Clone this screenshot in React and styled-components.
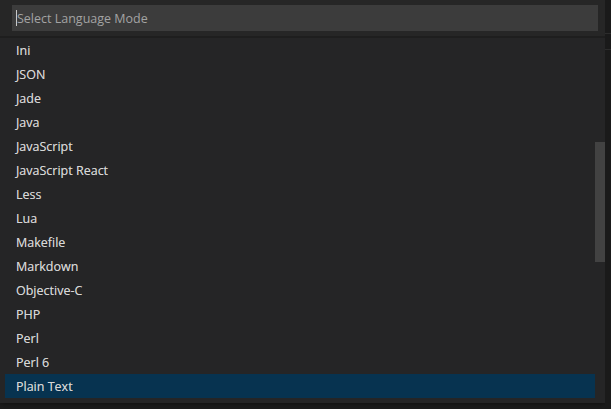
import React from "react";
import { createGlobalStyle, styled } from "styled-components";

const languages = [
  "Ini",
  "JSON",
  "Jade",
  "Java",
  "JavaScript",
  "JavaScript React",
  "Less",
  "Lua",
  "Makefile",
  "Markdown",
  "Objective-C",
  "PHP",
  "Perl",
  "Perl 6",
  "Plain Text",
];

export default function App() {
  return (
    <>
      <GlobalStyle />
      <Screen>
        <Widget>
          <Header>
            <InputBox>
              <Caret />
              <Placeholder>Select Language Mode</Placeholder>
            </InputBox>
          </Header>
          <ListArea>
            <List>
              {languages.map((lang) => (
                <Row key={lang} selected={lang === "Plain Text"}>
                  {lang}
                </Row>
              ))}
            </List>
            <ScrollThumb />
          </ListArea>
        </Widget>
        <RightGutter>
          <GutterLine />
          <GutterLine />
        </RightGutter>
      </Screen>
    </>
  );
}

const GlobalStyle = createGlobalStyle`
  html, body {
    margin: 0;
    padding: 0;
    background: #1b1b1b;
    font-family: "Open Sans", "Noto Sans", sans-serif;
  }
`;

const Screen = styled.div`
  display: flex;
  width: 611px;
  height: 409px;
  background: #1c1c1c;
  overflow: hidden;
`;

const Widget = styled.div`
  display: flex;
  flex-direction: column;
  width: 605px;
  height: 403px;
  background: #252526;
  box-shadow: 0 0 6px rgba(0, 0, 0, 0.6);
`;

const Header = styled.div`
  height: 38px;
  padding: 5px 7px 0 12px;
  box-sizing: border-box;
  border-bottom: 2px solid #1e1e1e;
  background: #262626;
`;

const InputBox = styled.div`
  display: flex;
  align-items: center;
  height: 26px;
  background: #3c3c3c;
  padding-left: 4px;
`;

const Caret = styled.span`
  width: 1px;
  height: 16px;
  background: #c8c8c8;
`;

const Placeholder = styled.span`
  font-size: 12.5px;
  color: #a3a3a3;
  padding-top: 1px;
`;

const ListArea = styled.div`
  display: flex;
  flex: 1;
  padding-left: 5px;
`;

const List = styled.div`
  flex: 1;
  display: flex;
  flex-direction: column;
`;

const Row = styled.div`
  height: 24px;
  box-sizing: border-box;
  padding: 2px 0 0 11px;
  line-height: 22px;
  font-size: 12.5px;
  color: #d6d6d6;
  text-shadow: 0 0 0.4px rgba(214, 214, 214, 0.6);
  background: ${(p) => (p.selected ? "#073350" : "transparent")};
`;

const ScrollThumb = styled.div`
  width: 10px;
  height: 120px;
  margin-top: 104px;
  background: #424242;
`;

const RightGutter = styled.div`
  flex: 1;
  display: flex;
  flex-direction: column;
  gap: 15px;
  padding-top: 33px;
  background: #1a1a1a;
`;

const GutterLine = styled.div`
  height: 1px;
  background: #2c2c2c;
`;
